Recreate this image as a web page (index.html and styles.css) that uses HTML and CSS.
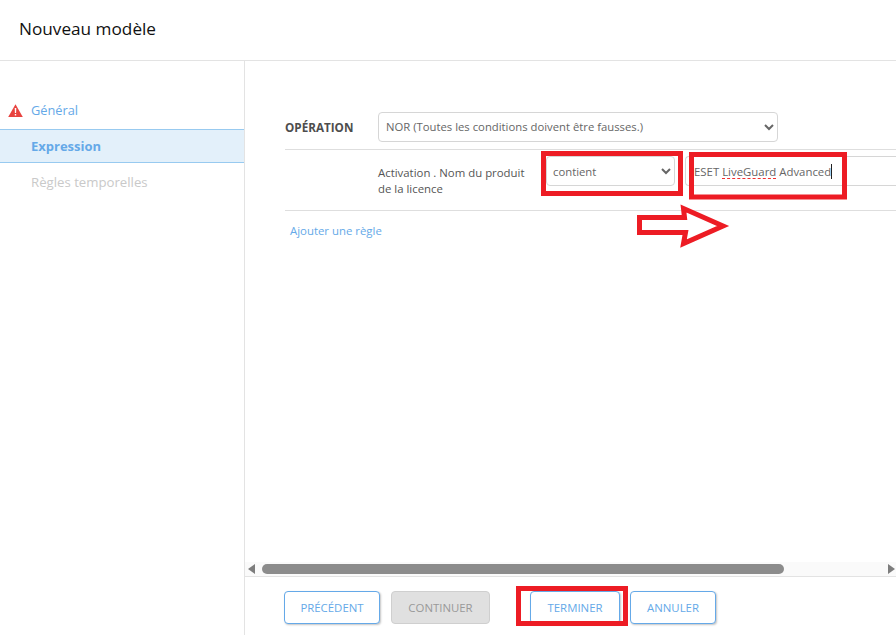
FILE: index.html
```html
<!DOCTYPE html>
<html lang="fr">
<head>
<meta charset="utf-8">
<title>Nouveau modèle</title>
<link rel="stylesheet" href="styles.css">
</head>
<body>
<div class="app">
  <header class="header"><h1 class="title">Nouveau modèle</h1></header>
  <div class="body">
    <nav class="side">
      <div class="nav-item nav-link">
        <svg class="warn" width="15" height="13" viewBox="0 0 15 13"><path d="M7.5 0.3 14.8 13H0.2Z" fill="#e8433f"/><path d="M6.7 4h1.6l-.2 5H6.9ZM6.8 10h1.4v1.5H6.8Z" fill="#fff"/></svg>
        <span>Général</span>
      </div>
      <div class="nav-item nav-active">Expression</div>
      <div class="nav-item nav-disabled">Règles temporelles</div>
    </nav>
    <main class="main">
      <div class="content">
        <div class="op-row">
          <label class="op-label">OPÉRATION</label>
          <select class="select select-op"><option>NOR (Toutes les conditions doivent être fausses.)</option></select>
        </div>
        <div class="rule-row">
          <div class="rule-name">Activation . Nom du produit de la licence</div>
          <select class="select select-cond"><option>contient</option></select>
          <div class="input"><span>ESET <span class="spell">LiveGuard</span> Advanced</span><span class="caret"></span></div>
        </div>
        <a class="add-link">Ajouter une règle</a>
      </div>
      <div class="scrollbar">
        <svg width="8" height="10" viewBox="0 0 8 10"><path d="M7 0v10L0 5Z" fill="#7d7d7d"/></svg>
        <div class="track"><div class="thumb"></div></div>
        <svg width="8" height="10" viewBox="0 0 8 10"><path d="M1 0v10l7-5Z" fill="#7d7d7d"/></svg>
      </div>
      <footer class="footer">
        <button class="btn btn-prev">PRÉCÉDENT</button>
        <button class="btn btn-next" disabled>CONTINUER</button>
        <button class="btn btn-finish">TERMINER</button>
        <button class="btn btn-cancel">ANNULER</button>
      </footer>
    </main>
  </div>
</div>
<svg class="marks" width="896" height="635" viewBox="0 0 896 635">
  <g fill="none" stroke="#ed1c24" stroke-width="5">
    <rect x="543.5" y="153.5" width="137" height="40"/>
    <rect x="691.5" y="154.5" width="153" height="42.5"/>
    <rect x="518.5" y="588.5" width="107" height="35"/>
    <path d="M639.5 217.5H684.5L683.5 208.5 723 226 683.5 243.5 685.5 232.5H639.5Z"/>
  </g>
</svg>
</body>
</html>
```
FILE: styles.css
```css
* { box-sizing: border-box; }
html, body { margin: 0; height: 100%; overflow: hidden; background: #fff; }
body { font-family: "Open Sans", "Noto Sans", sans-serif; font-size: 11.4px; color: #555; width: 896px; height: 635px; position: relative; }
.app { display: flex; flex-direction: column; height: 635px; }
.header { height: 61px; flex: none; border-bottom: 1px solid #e3e3e3; display: flex; align-items: center; padding: 0 0 3px 19px; }
.title { margin: 0; font-size: 17.2px; font-weight: 400; color: #111; }
.body { flex: 1; display: flex; min-height: 0; }
.side { width: 245px; flex: none; border-right: 1px solid #e3e3e3; padding-top: 31px; }
.nav-item { height: 36px; padding-left: 31px; display: flex; align-items: center; font-size: 13.2px; position: relative; }
.warn { position: absolute; left: 8px; top: 12px; }
.nav-link { color: #65a9e8; height: 37px; padding-bottom: 2px; font-size: 12.8px; }
.nav-active { height: 34px; margin-bottom: 1px; background: #e3f0fa; border-top: 1px solid #98caf0; border-bottom: 1px solid #98caf0; color: #65a9e8; font-weight: 700; font-size: 13px; }
.nav-disabled { color: #c9c9c9; }
.main { flex: 1; min-width: 0; display: flex; flex-direction: column; }
.content { flex: 1; padding: 51px 0 0 40px; min-height: 0; }
.op-row { display: flex; align-items: center; height: 38px; padding-bottom: 8px; border-bottom: 1px solid #dedede; }
.op-label { width: 93px; font-weight: 700; font-size: 11.7px; color: #4d4d4d; }
.select { height: 30px; border: 1px solid #d6d6d6; border-radius: 4px; background: #fff; color: #666; font: inherit; font-size: 11.3px; padding-left: 3px; }
.select-op { width: 400px; }
.select-cond { width: 129px; flex: none; padding-left: 2px; }
.rule-row { display: flex; align-items: flex-start; height: 61px; padding: 6px 0 0 93px; border-bottom: 1px solid #dedede; width: 611px; overflow: hidden; }
.rule-name { width: 168px; flex: none; padding-top: 9px; line-height: 16px; color: #555; padding-right: 12px; }
.input { margin-left: 10px; width: 260px; flex: none; height: 30px; border: 1px solid #d6d6d6; border-right: 0; border-radius: 4px 0 0 4px; display: flex; align-items: center; padding-left: 8px; color: #666; white-space: nowrap; }
.spell { text-decoration: underline dashed #f03030; text-decoration-thickness: 1px; text-underline-offset: 2px; }
.caret { display: inline-block; width: 1px; height: 15px; background: #222; }
.add-link { display: block; margin: 12px 0 0 5px; color: #65a9e8; line-height: 16px; }
.scrollbar { height: 14px; flex: none; background: #fafafa; display: flex; align-items: center; padding: 0 1px 0 3px; }
.track { flex: 1; height: 100%; padding: 2px 0 2px 6px; }
.thumb { width: 522px; height: 10px; background: #8c8c8c; border-radius: 5px; }
.footer { height: 59px; flex: none; border-top: 1px solid #e3e3e3; display: flex; align-items: flex-start; padding: 14px 0 0 39px; }
.btn { height: 33px; border: 1px solid #65a9e8; border-radius: 4px; background: #fff; color: #65a9e8; font: inherit; padding: 0; box-shadow: 1px 1px 2px #c4c4c4; }
.btn-prev { width: 96px; margin-right: 11px; }
.btn-next { width: 99px; margin-right: 40px; background: #e0e0e0; border-color: #cfcfcf; color: #999; box-shadow: none; }
.btn-finish { width: 90px; margin-right: 10px; }
.btn-cancel { width: 86px; }
.marks { position: absolute; left: 0; top: 0; pointer-events: none; }
```
